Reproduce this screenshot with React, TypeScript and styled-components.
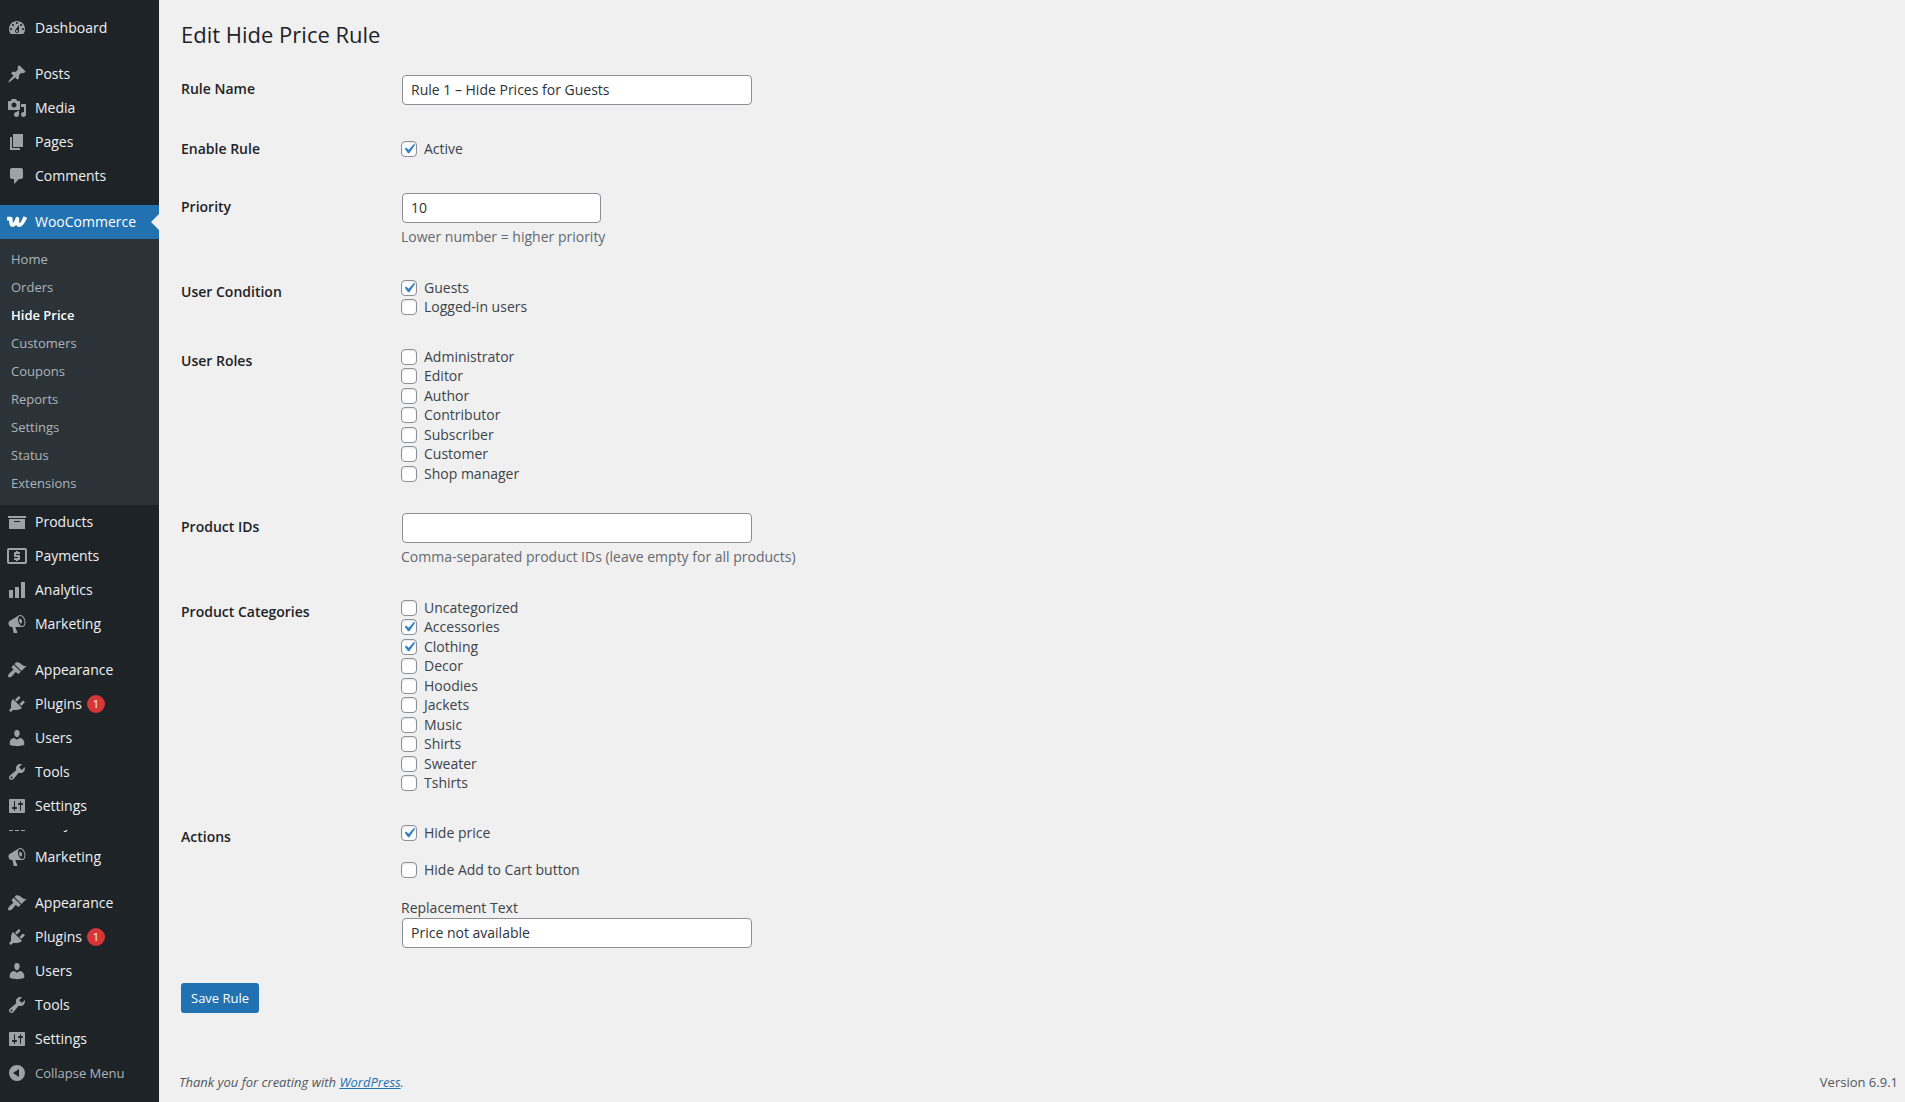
import React, { useState } from "react";
import styled, { createGlobalStyle } from "styled-components";
import { MdLocalAtm } from "react-icons/md";

const colors = {
  page: "#f0f0f0",
  menu: "#1d2327",
  submenu: "#2c3338",
  menuText: "#f0f0f1",
  menuIcon: "#9ca2a7",
  submenuText: "#adb3b8",
  accent: "#2271b1",
  alert: "#d63638",
  heading: "#1d2327",
  body: "#3c434a",
  input: "#2c3338",
  muted: "#646970",
  border: "#8c8f94",
};

const fontStack = `"Open Sans", "Noto Sans", sans-serif`;

const GlobalStyle = createGlobalStyle`
  *, *::before, *::after { box-sizing: border-box; }
  body {
    margin: 0;
    background: ${colors.page};
    color: ${colors.body};
    font-family: ${fontStack};
    font-size: 14px;
    line-height: 19px;
  }
  input, button { font-family: inherit; }
`;

const Layout = styled.div`
  display: flex;
  min-height: 100vh;
`;

/* ---------- admin menu ---------- */

const Sidebar = styled.nav`
  flex: 0 0 159px;
  padding: 11px 0 12px;
  background: ${colors.menu};
`;

const MenuList = styled.ul`
  margin: 0;
  padding: 0;
  list-style: none;
`;

const MenuSeparator = styled.li`
  height: 12px;
`;

const MenuLink = styled.a<{ $current?: boolean }>`
  position: relative;
  display: flex;
  align-items: center;
  height: 34px;
  padding-left: 7px;
  gap: 8px;
  color: ${(p) => (p.$current ? "#fff" : colors.menuText)};
  background: ${(p) => (p.$current ? colors.accent : "transparent")};
  line-height: 18px;
  text-decoration: none;
`;

const CurrentArrow = styled.span`
  position: absolute;
  top: 9px;
  right: 0;
  border: 8px solid transparent;
  border-left-width: 0;
  border-right-color: ${colors.page};
`;

const IconBox = styled.span<{ $current?: boolean }>`
  display: flex;
  flex: 0 0 20px;
  justify-content: center;
  min-width: 0;
  color: ${(p) => (p.$current ? "#fff" : colors.menuIcon)};

  svg {
    flex: none;
    fill: currentColor;
  }
`;

const Badge = styled.span`
  display: inline-block;
  width: 18px;
  height: 18px;
  margin-left: 5px;
  border-radius: 50%;
  background: ${colors.alert};
  color: #fff;
  font-size: 11px;
  line-height: 18px;
  text-align: center;
`;

const MenuLabel = styled.span`
  display: flex;
  align-items: center;
`;

const Submenu = styled.ul`
  margin: 0;
  padding: 6px 0 8px;
  background: ${colors.submenu};
  list-style: none;
`;

const SubmenuLink = styled.a<{ $current?: boolean }>`
  display: block;
  padding-left: 11px;
  color: ${(p) => (p.$current ? "#fff" : colors.submenuText)};
  font-size: 13px;
  font-weight: ${(p) => (p.$current ? 600 : 400)};
  line-height: 28px;
  text-decoration: none;
`;

const ClippedRow = styled.li`
  display: flex;
  align-items: flex-end;
  height: 10px;
  margin-top: 7px;
  overflow: hidden;
`;

const CollapseButton = styled.button`
  display: flex;
  align-items: center;
  gap: 8px;
  width: 100%;
  height: 34px;
  padding: 0 0 0 7px;
  border: 0;
  background: none;
  color: ${colors.submenuText};
  font-size: 13px;
  line-height: 18px;
`;

/* ---------- content ---------- */

const Content = styled.div`
  display: flex;
  flex: 1;
  flex-direction: column;
  min-width: 0;
`;

const Main = styled.main`
  padding: 18px 20px 20px 22px;
`;

const Title = styled.h1`
  margin: 0 0 10px;
  color: ${colors.heading};
  font-size: 22px;
  font-weight: 400;
  line-height: 32px;
`;

const FormRow = styled.div`
  display: grid;
  grid-template-columns: 220px 1fr;
`;

const RowHeading = styled.div`
  padding-top: 20px;
  color: ${colors.heading};
  font-weight: 600;
  line-height: 18px;
`;

const Field = styled.div`
  padding: 15px 0;
`;

const TextInput = styled.input<{ $narrow?: boolean }>`
  display: block;
  width: ${(p) => (p.$narrow ? 199 : 350)}px;
  max-width: 100%;
  height: 30px;
  margin: 0 1px;
  padding: 0 8px 2px;
  border: 1px solid ${colors.border};
  border-radius: 4px;
  background: #fff;
  color: ${colors.input};
  font-size: 14px;
  appearance: textfield;
`;

const Description = styled.p`
  margin: 3px 0 1px;
  color: ${colors.muted};
  line-height: 21px;
`;

const CheckList = styled.ul`
  margin: 0;
  padding: 0;
  list-style: none;
`;

const CheckItem = styled.li`
  height: 19px;

  &:nth-child(even) {
    height: 20px;
  }
`;

const CheckLabel = styled.label`
  display: flex;
  gap: 7px;
  width: fit-content;
`;

const SingleCheck = styled.div`
  padding: 4px 0 5px;
`;

const ActionStack = styled.div`
  display: grid;
  gap: 16px;
`;

const ActionItem = styled.div`
  padding-bottom: 2px;
`;

const ReplacementLabel = styled.label`
  display: block;
  line-height: 21px;
`;

const CheckFrame = styled.span`
  display: grid;
  flex: 0 0 16px;
  height: 16px;
  margin-top: 2px;

  > * {
    grid-area: 1 / 1;
  }

  svg {
    pointer-events: none;
  }
`;

const CheckInput = styled.input`
  width: 16px;
  height: 16px;
  margin: 0;
  border: 1px solid ${colors.border};
  border-radius: 4px;
  background: #fff;
  box-shadow: inset 0 1px 2px rgba(0, 0, 0, 0.1);
  appearance: none;
`;

const SaveButton = styled.button`
  height: 30px;
  margin-top: 20px;
  padding: 0 10px;
  border: 0;
  border-radius: 3px;
  background: ${colors.accent};
  color: #fff;
  font-size: 13px;
`;

const Footer = styled.footer`
  display: flex;
  justify-content: space-between;
  margin-top: auto;
  padding: 0 7px 10px 20px;
  color: #50575e;
  font-size: 13px;
  line-height: 20px;
`;

const FooterLink = styled.a`
  color: ${colors.accent};
`;

/* ---------- icons ---------- */

const iconPaths = {
  dashboard:
    "M3.76 16h12.48c1.1-1.37 1.76-3.11 1.76-5 0-4.42-3.58-8-8-8s-8 3.58-8 8c0 1.89.66 3.63 1.76 5zM10 4c.55 0 1 .45 1 1s-.45 1-1 1-1-.45-1-1 .45-1 1-1zM6 6c.55 0 1 .45 1 1s-.45 1-1 1-1-.45-1-1 .45-1 1-1zm8 0c.55 0 1 .45 1 1s-.45 1-1 1-1-.45-1-1 .45-1 1-1zm-5.37 5.55L12 7v6c0 1.1-.9 2-2 2s-2-.9-2-2c0-.57.24-1.08.63-1.45zM4 10c.55 0 1 .45 1 1s-.45 1-1 1-1-.45-1-1 .45-1 1-1zm12 0c.55 0 1 .45 1 1s-.45 1-1 1-1-.45-1-1 .45-1 1-1zm-5 3c0-.55-.45-1-1-1s-1 .45-1 1 .45 1 1 1 1-.45 1-1z",
  posts:
    "M10.44 3.02l1.82-1.82 6.36 6.35-1.83 1.82c-1.05-.68-2.48-.57-3.41.36l-.75.75c-.92.93-1.04 2.35-.35 3.41l-1.83 1.82-2.41-2.41-2.8 2.79c-.42.42-3.38 2.71-3.8 2.29s1.86-3.39 2.28-3.81l2.79-2.79L4.1 9.36l1.83-1.82c1.05.69 2.48.57 3.4-.36l.75-.75c.93-.92 1.05-2.35.36-3.41z",
  media:
    "M13 11V4c0-.55-.45-1-1-1h-1.67L9 1H5L3.67 3H2c-.55 0-1 .45-1 1v7c0 .55.45 1 1 1h10c.55 0 1-.45 1-1zM7 4.5c1.38 0 2.5 1.12 2.5 2.5S8.38 9.5 7 9.5 4.5 8.38 4.5 7 5.62 4.5 7 4.5zM14 6h5v10.5c0 1.38-1.12 2.5-2.5 2.5S14 17.88 14 16.5s1.12-2.5 2.5-2.5c.17 0 .34.02.5.05V9h-3V6zm-4 8.05V13h2v3.5c0 1.38-1.12 2.5-2.5 2.5S7 17.88 7 16.5 8.12 14 9.5 14c.17 0 .34.02.5.05z",
  pages: "M6 15V2h10v13H6zm-1 1h8v2H3V5h2v11z",
  comments: "M5 2h9c1.1 0 2 .9 2 2v7c0 1.1-.9 2-2 2h-2l-5 5v-5H5c-1.1 0-2-.9-2-2V4c0-1.1.9-2 2-2z",
  products: "M19 4v2H1V4h18zM2 7h16v10H2V7zm11 3V9H7v1h6z",
  analytics: "M18 18V2h-4v16h4zm-6 0V7H8v11h4zm-6 0v-8H2v8h4z",
  marketing:
    "M18.15 5.94c.46 1.62.38 3.22-.02 4.48-.42 1.28-1.26 2.18-2.3 2.48-.16.06-.26.06-.4.06-.06.02-.12.02-.18.02-.06.02-.14.02-.22.02h-6.8l2.22 5.5c.02.14-.06.26-.14.34-.08.1-.24.16-.34.16H6.95c-.1 0-.26-.06-.34-.16-.08-.08-.16-.2-.14-.34l-1-5.5H4.25l-.02-.02c-.5.06-1.08-.18-1.54-.62s-.88-1.08-1.06-1.88c-.24-.8-.2-1.56-.02-2.2.18-.62.58-1.08 1.06-1.3l.02-.02 9-5.4c.1-.06.18-.1.24-.16.06-.04.14-.08.24-.12.16-.08.28-.12.5-.18 1.04-.3 2.24.1 3.22.98s1.84 2.24 2.26 3.86zm-2.58 5.98h-.02c.4-.1.74-.34 1.04-.7.58-.7.86-1.76.86-3.04 0-.64-.1-1.3-.28-1.98-.34-1.36-1.02-2.5-1.78-3.24s-1.68-1.1-2.46-.88c-.82.22-1.4.96-1.7 2-.32 1.04-.28 2.36.06 3.72.38 1.36 1 2.5 1.8 3.24.78.74 1.62 1.1 2.48.88zm-2.54-7.08c.22-.04.42-.02.62.04.38.16.76.48 1.02 1s.42 1.2.42 1.78c0 .3-.04.56-.12.8-.18.48-.44.84-.86.94-.34.1-.8-.06-1.14-.4s-.64-.86-.78-1.5c-.18-.62-.12-1.24.02-1.72s.48-.84.82-.94z",
  appearance:
    "M14.48 11.06L7.41 3.99l1.5-1.5c.5-.56 2.3-.47 3.51.32 1.21.8 1.43 1.28 2.91 2.1 1.18.64 2.45 1.26 4.45.85zm-.71.71L6.7 4.7 4.93 6.47c-.39.39-.39 1.02 0 1.41l1.06 1.06c.39.39.39 1.03 0 1.42-.6.6-1.43 1.11-2.21 1.69-.35.26-.7.53-1.01.84C1.43 14.23.4 16.08 1.4 17.07c.99 1 2.84-.03 4.18-1.36.31-.31.58-.66.85-1.02.57-.78 1.08-1.61 1.69-2.21.39-.39 1.02-.39 1.41 0l1.06 1.06c.39.39 1.02.39 1.41 0z",
  plugins:
    "M13.11 4.36L9.87 7.6 8 5.73l3.24-3.24c.35-.34 1.05-.2 1.56.32.52.51.66 1.21.31 1.55zm-8 1.77l.91-1.12 9.01 9.01-1.19.84c-.71.71-2.63 1.16-3.82 1.16H6.14L4.9 17.26c-.59.59-1.54.59-2.12 0-.59-.58-.59-1.53 0-2.12l1.24-1.24v-3.88c0-1.13.4-3.19 1.09-3.89zm7.26 3.97l3.24-3.24c.34-.35 1.04-.21 1.55.31.52.51.66 1.21.31 1.55l-3.24 3.25z",
  users:
    "M10 9.25c-2.27 0-2.73-3.44-2.73-3.44C7 4.02 7.82 2 9.97 2c2.16 0 2.98 2.02 2.71 3.81 0 0-.41 3.44-2.68 3.44zm0 2.57L12.72 10c2.39 0 4.52 2.33 4.52 4.53v2.49s-3.65 1.13-7.24 1.13c-3.65 0-7.24-1.13-7.24-1.13v-2.49c0-2.25 1.94-4.48 4.47-4.48z",
  tools:
    "M16.68 9.77c-1.34 1.34-3.3 1.67-4.95.99l-5.41 6.52c-.99.99-2.59.99-3.58 0s-.99-2.59 0-3.57l6.52-5.42c-.68-1.65-.35-3.61.99-4.95 1.28-1.28 3.12-1.62 4.72-1.06l-2.89 2.89 2.82 2.82 2.86-2.87c.53 1.58.18 3.39-1.08 4.65zM3.81 16.21c.4.39 1.04.39 1.43 0 .4-.4.4-1.04 0-1.43-.39-.4-1.03-.4-1.43 0-.39.39-.39 1.03 0 1.43z",
  settings:
    "M18 16V4c0-.55-.45-1-1-1H3c-.55 0-1 .45-1 1v12c0 .55.45 1 1 1h14c.55 0 1-.45 1-1zM8 11h1c.55 0 1 .45 1 1s-.45 1-1 1H8v1.5c0 .28-.22.5-.5.5s-.5-.22-.5-.5V13H6c-.55 0-1-.45-1-1s.45-1 1-1h1V5.5c0-.28.22-.5.5-.5s.5.22.5.5V11zm5-2h-1c-.55 0-1-.45-1-1s.45-1 1-1h1V5.5c0-.28.22-.5.5-.5s.5.22.5.5V7h1c.55 0 1 .45 1 1s-.45 1-1 1h-1v5.5c0 .28-.22.5-.5.5s-.5-.22-.5-.5V9z",
  collapse: "M10 2a8 8 0 1 0 0 16a8 8 0 1 0 0-16zM12 6v8L6 10z",
};

type IconName = keyof typeof iconPaths | "woo" | "payments";

const StrokePath = styled.path`
  fill: none;
  stroke: currentColor;
`;

function MenuIcon({ name }: { name: IconName }) {
  if (name === "payments") return <MdLocalAtm size={24} aria-hidden="true" />;
  if (name === "woo") {
    return (
      <svg width="20" height="20" viewBox="0 0 20 20" aria-hidden="true">
        <StrokePath
          strokeWidth="3.8"
          strokeLinecap="square"
          strokeLinejoin="round"
          d="M2 6.600h1.700c0 3 .2 6.500 1.800 6.500 2 0 3.900-3.800 4.900-6.300-.4 3 0 6.300 1.900 6.300 2.300 0 4.100-3.700 5.300-6.300"
        />
      </svg>
    );
  }
  return (
    <svg width="20" height="20" viewBox="0 0 20 20" fillRule="evenodd" aria-hidden="true">
      <path d={iconPaths[name]} />
    </svg>
  );
}

/* ---------- data ---------- */

interface MenuEntry {
  label: string;
  icon: IconName;
  badge?: number;
}

const contentMenu: MenuEntry[] = [
  { label: "Posts", icon: "posts" },
  { label: "Media", icon: "media" },
  { label: "Pages", icon: "pages" },
  { label: "Comments", icon: "comments" },
];

const storeMenu: MenuEntry[] = [
  { label: "Products", icon: "products" },
  { label: "Payments", icon: "payments" },
  { label: "Analytics", icon: "analytics" },
  { label: "Marketing", icon: "marketing" },
];

const siteMenu: MenuEntry[] = [
  { label: "Appearance", icon: "appearance" },
  { label: "Plugins", icon: "plugins", badge: 1 },
  { label: "Users", icon: "users" },
  { label: "Tools", icon: "tools" },
  { label: "Settings", icon: "settings" },
];

const wooSubmenu = [
  "Home",
  "Orders",
  "Hide Price",
  "Customers",
  "Coupons",
  "Reports",
  "Settings",
  "Status",
  "Extensions",
];

const userConditions = ["Guests", "Logged-in users"];

const userRoles = [
  "Administrator",
  "Editor",
  "Author",
  "Contributor",
  "Subscriber",
  "Customer",
  "Shop manager",
];

const categories = [
  "Uncategorized",
  "Accessories",
  "Clothing",
  "Decor",
  "Hoodies",
  "Jackets",
  "Music",
  "Shirts",
  "Sweater",
  "Tshirts",
];

/* ---------- parts ---------- */

function MenuItemLink({ entry }: { entry: MenuEntry }) {
  return (
    <MenuLink href="#">
      <IconBox>
        <MenuIcon name={entry.icon} />
      </IconBox>
      <MenuLabel>
        {entry.label}
        {entry.badge && <Badge>{entry.badge}</Badge>}
      </MenuLabel>
    </MenuLink>
  );
}

function MenuItems({ entries }: { entries: MenuEntry[] }) {
  return (
    <>
      {entries.map((entry) => (
        <li key={entry.label}>
          <MenuItemLink entry={entry} />
        </li>
      ))}
    </>
  );
}

function Checkbox({ label, defaultChecked = false }: { label: string; defaultChecked?: boolean }) {
  const [checked, setChecked] = useState(defaultChecked);
  return (
    <CheckLabel>
      <CheckFrame>
        <CheckInput
          type="checkbox"
          checked={checked}
          onChange={(event) => setChecked(event.target.checked)}
        />
        {checked && (
          <svg width="16" height="16" viewBox="2 2 16 16" aria-hidden="true">
            <path
              fill="#3582c4"
              d="M14.83 4.89l1.34.94-5.81 8.38H9.02L5.78 9.67l1.34-1.25 2.57 2.4z"
            />
          </svg>
        )}
      </CheckFrame>
      {label}
    </CheckLabel>
  );
}

function CheckGroup({ title, options, selected = [] }: { title: string; options: string[]; selected?: string[] }) {
  return (
    <CheckList aria-label={title}>
      {options.map((option) => (
        <CheckItem key={option}>
          <Checkbox label={option} defaultChecked={selected.includes(option)} />
        </CheckItem>
      ))}
    </CheckList>
  );
}

function AdminMenu() {
  return (
    <Sidebar aria-label="Main menu">
      <MenuList>
        <MenuItems entries={[{ label: "Dashboard", icon: "dashboard" }]} />
        <MenuSeparator />
        <MenuItems entries={contentMenu} />
        <MenuSeparator />
        <li>
          <MenuLink href="#" $current>
            <IconBox $current>
              <MenuIcon name="woo" />
            </IconBox>
            <MenuLabel>WooCommerce</MenuLabel>
            <CurrentArrow />
          </MenuLink>
          <Submenu>
            {wooSubmenu.map((label) => (
              <li key={label}>
                <SubmenuLink href="#" $current={label === "Hide Price"}>
                  {label}
                </SubmenuLink>
              </li>
            ))}
          </Submenu>
        </li>
        <MenuItems entries={storeMenu} />
        <MenuSeparator />
        <MenuItems entries={siteMenu} />
        <ClippedRow>
          <MenuItemLink entry={storeMenu[2]} />
        </ClippedRow>
        <MenuItems entries={storeMenu.slice(3)} />
        <MenuSeparator />
        <MenuItems entries={siteMenu} />
      </MenuList>
      <CollapseButton type="button">
        <IconBox>
          <MenuIcon name="collapse" />
        </IconBox>
        Collapse Menu
      </CollapseButton>
    </Sidebar>
  );
}

export default function App() {
  return (
    <>
      <GlobalStyle />
      <Layout>
        <AdminMenu />
        <Content>
          <Main>
            <Title>Edit Hide Price Rule</Title>
            <form onSubmit={(event) => event.preventDefault()}>
              <FormRow>
                <RowHeading>
                  <label htmlFor="rule-name">Rule Name</label>
                </RowHeading>
                <Field>
                  <TextInput id="rule-name" type="text" defaultValue="Rule 1 – Hide Prices for Guests" />
                </Field>
              </FormRow>
              <FormRow>
                <RowHeading>Enable Rule</RowHeading>
                <Field>
                  <SingleCheck>
                    <Checkbox label="Active" defaultChecked />
                  </SingleCheck>
                </Field>
              </FormRow>
              <FormRow>
                <RowHeading>
                  <label htmlFor="priority">Priority</label>
                </RowHeading>
                <Field>
                  <TextInput id="priority" type="number" defaultValue={10} $narrow />
                  <Description>Lower number = higher priority</Description>
                </Field>
              </FormRow>
              <FormRow>
                <RowHeading>User Condition</RowHeading>
                <Field>
                  <CheckGroup title="User Condition" options={userConditions} selected={["Guests"]} />
                </Field>
              </FormRow>
              <FormRow>
                <RowHeading>User Roles</RowHeading>
                <Field>
                  <CheckGroup title="User Roles" options={userRoles} />
                </Field>
              </FormRow>
              <FormRow>
                <RowHeading>
                  <label htmlFor="product-ids">Product IDs</label>
                </RowHeading>
                <Field>
                  <TextInput id="product-ids" type="text" />
                  <Description>Comma-separated product IDs (leave empty for all products)</Description>
                </Field>
              </FormRow>
              <FormRow>
                <RowHeading>Product Categories</RowHeading>
                <Field>
                  <CheckGroup
                    title="Product Categories"
                    options={categories}
                    selected={["Accessories", "Clothing"]}
                  />
                </Field>
              </FormRow>
              <FormRow>
                <RowHeading>Actions</RowHeading>
                <Field>
                  <ActionStack>
                    <ActionItem>
                      <Checkbox label="Hide price" defaultChecked />
                    </ActionItem>
                    <ActionItem>
                      <Checkbox label="Hide Add to Cart button" />
                    </ActionItem>
                    <div>
                      <ReplacementLabel htmlFor="replacement-text">Replacement Text</ReplacementLabel>
                      <TextInput id="replacement-text" type="text" defaultValue="Price not available" />
                    </div>
                  </ActionStack>
                </Field>
              </FormRow>
              <SaveButton type="submit">Save Rule</SaveButton>
            </form>
          </Main>
          <Footer>
            <em>
              Thank you for creating with <FooterLink href="#">WordPress</FooterLink>.
            </em>
            <span>Version 6.9.1</span>
          </Footer>
        </Content>
      </Layout>
    </>
  );
}
